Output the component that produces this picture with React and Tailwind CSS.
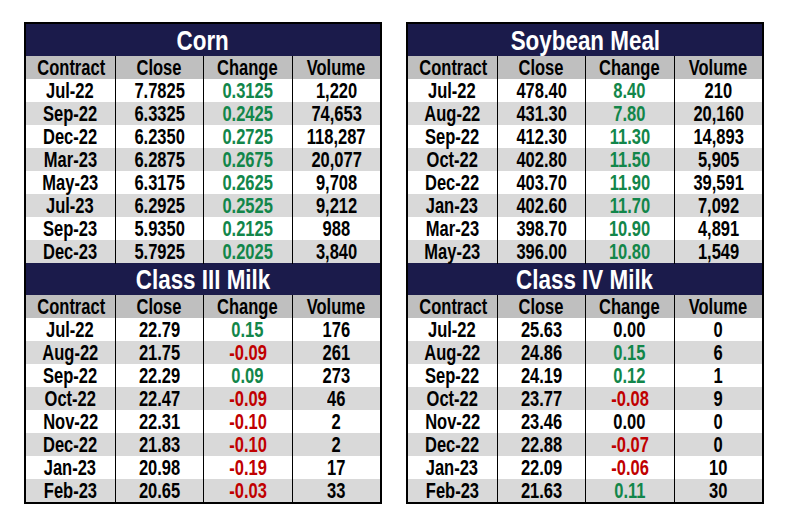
const corn = [
  ["Jul-22", "7.7825", "0.3125", "1,220"],
  ["Sep-22", "6.3325", "0.2425", "74,653"],
  ["Dec-22", "6.2350", "0.2725", "118,287"],
  ["Mar-23", "6.2875", "0.2675", "20,077"],
  ["May-23", "6.3175", "0.2625", "9,708"],
  ["Jul-23", "6.2925", "0.2525", "9,212"],
  ["Sep-23", "5.9350", "0.2125", "988"],
  ["Dec-23", "5.7925", "0.2025", "3,840"],
];

const milk3 = [
  ["Jul-22", "22.79", "0.15", "176"],
  ["Aug-22", "21.75", "-0.09", "261"],
  ["Sep-22", "22.29", "0.09", "273"],
  ["Oct-22", "22.47", "-0.09", "46"],
  ["Nov-22", "22.31", "-0.10", "2"],
  ["Dec-22", "21.83", "-0.10", "2"],
  ["Jan-23", "20.98", "-0.19", "17"],
  ["Feb-23", "20.65", "-0.03", "33"],
];

const soy = [
  ["Jul-22", "478.40", "8.40", "210"],
  ["Aug-22", "431.30", "7.80", "20,160"],
  ["Sep-22", "412.30", "11.30", "14,893"],
  ["Oct-22", "402.80", "11.50", "5,905"],
  ["Dec-22", "403.70", "11.90", "39,591"],
  ["Jan-23", "402.60", "11.70", "7,092"],
  ["Mar-23", "398.70", "10.90", "4,891"],
  ["May-23", "396.00", "10.80", "1,549"],
];

const milk4 = [
  ["Jul-22", "25.63", "0.00", "0"],
  ["Aug-22", "24.86", "0.15", "6"],
  ["Sep-22", "24.19", "0.12", "1"],
  ["Oct-22", "23.77", "-0.08", "9"],
  ["Nov-22", "23.46", "0.00", "0"],
  ["Dec-22", "22.88", "-0.07", "0"],
  ["Jan-23", "22.09", "-0.06", "10"],
  ["Feb-23", "21.63", "0.11", "30"],
];

const changeColor = (v) => {
  if (v.startsWith("-")) return "text-[#c00000]";
  if (parseFloat(v) === 0) return "text-black";
  return "text-[#12864a]";
};

// narrow the glyphs to get the condensed look
const Txt = ({ children }) => (
  <span className="inline-block scale-x-[0.75] whitespace-nowrap">{children}</span>
);

const Title = ({ children }) => (
  <span className="inline-block scale-x-[0.8] whitespace-nowrap">{children}</span>
);

const Section = ({ title, rows }) => {
  return (
    <div>
      <div className="h-[32px] bg-[#1b1b4b] text-white text-[28px] leading-[34px] text-center">
        <Title>{title}</Title>
      </div>
      <div className="grid grid-cols-4 h-[23px] bg-[#bfbfbf] leading-[24px]">
        <span><Txt>Contract</Txt></span>
        <span className="border-l border-black"><Txt>Close</Txt></span>
        <span className="border-l border-black"><Txt>Change</Txt></span>
        <span className="border-l border-black"><Txt>Volume</Txt></span>
      </div>
      {rows.map((r, i) => (
        <div
          key={r[0]}
          className={`grid grid-cols-4 h-[23px] leading-[24px] ${i % 2 === 0 ? "bg-white" : "bg-[#d9d9d9]"}`}
        >
          <span><Txt>{r[0]}</Txt></span>
          <span className="border-l border-black"><Txt>{r[1]}</Txt></span>
          <span className={`border-l border-black ${changeColor(r[2])}`}><Txt>{r[2]}</Txt></span>
          <span className="border-l border-black"><Txt>{r[3]}</Txt></span>
        </div>
      ))}
    </div>
  );
};

export default function App() {
  return (
    <div
      className="w-[788px] h-[528px] bg-white flex gap-[24px] px-[24px] pt-[22px] text-black text-[22px] font-bold text-center"
      style={{ fontFamily: '"Liberation Sans", Arial, sans-serif' }}
    >
      <div className="w-[358px] border-2 border-black self-start">
        <Section title="Corn" rows={corn} />
        <Section title="Class III Milk" rows={milk3} />
      </div>
      <div className="w-[358px] border-2 border-black self-start">
        <Section title="Soybean Meal" rows={soy} />
        <Section title="Class IV Milk" rows={milk4} />
      </div>
    </div>
  );
}
